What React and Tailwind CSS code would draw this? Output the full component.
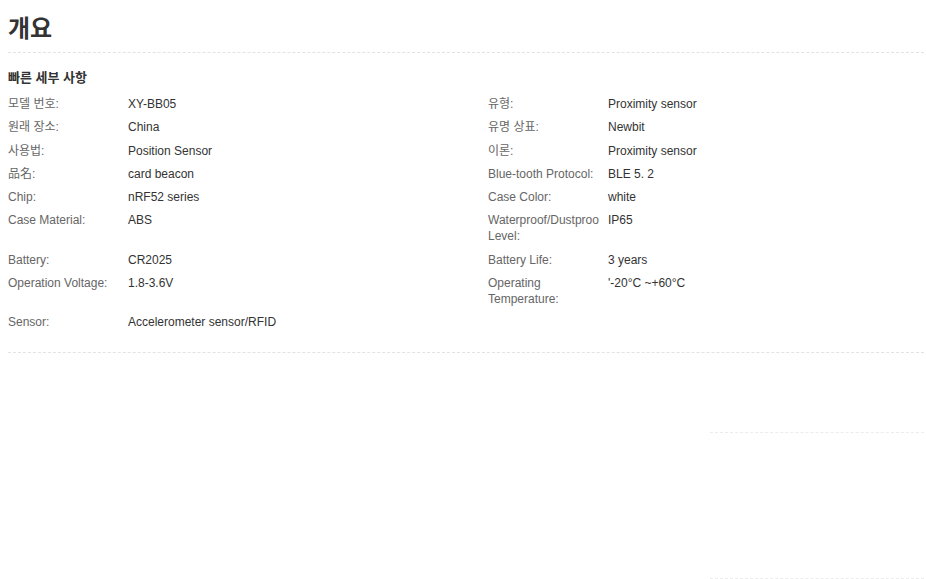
const SPECS = [
  ["모델 번호:", "XY-BB05", "유형:", "Proximity sensor"],
  ["원래 장소:", "China", "유명 상표:", "Newbit"],
  ["사용법:", "Position Sensor", "이론:", "Proximity sensor"],
  ["品名:", "card beacon", "Blue-tooth Protocol:", "BLE 5. 2"],
  ["Chip:", "nRF52 series", "Case Color:", "white"],
  ["Case Material:", "ABS", "Waterproof/Dustproo Level:", "IP65"],
  ["Battery:", "CR2025", "Battery Life:", "3 years"],
  ["Operation Voltage:", "1.8-3.6V", "Operating Temperature:", "'-20°C ~+60°C"],
  ["Sensor:", "Accelerometer sensor/RFID", "", ""],
];

export default function App() {
  return (
    <div className="min-h-[579px] bg-white pl-2 pr-[2px] font-['Liberation_Sans',Arial,'Noto_Sans_CJK_KR',sans-serif] text-[#333]">
      <h1 className="border-b border-dashed border-[#e3e3e3] pt-[11px] pb-[5px] text-[24px] font-bold leading-[36px] text-[#333]">
        개요
      </h1>

      <div className="border-b border-dashed border-[#e3e3e3] pb-[15px]">
        <h2 className="mt-[15px] mb-2 text-[13px] font-bold leading-5 text-[#333]">
          빠른 세부 사항
        </h2>
        <div className="grid grid-cols-[120px_360px_120px_1fr] text-[12px] leading-4">
          {SPECS.map((row, i) => (
            <div key={i} className="contents">
              <div className="mr-[5px] pb-[7.25px] text-[#666]">{row[0]}</div>
              <div className="pb-[7.25px] text-[#333]">{row[1]}</div>
              <div className="mr-[5px] pb-[7.25px] text-[#666]">{row[2]}</div>
              <div className="pb-[7.25px] text-[#333]">{row[3]}</div>
            </div>
          ))}
        </div>
      </div>

      <div className="ml-auto mt-[79px] h-[147px] w-[214px] border-t border-b border-dashed border-[#ececec]" />
    </div>
  );
}
